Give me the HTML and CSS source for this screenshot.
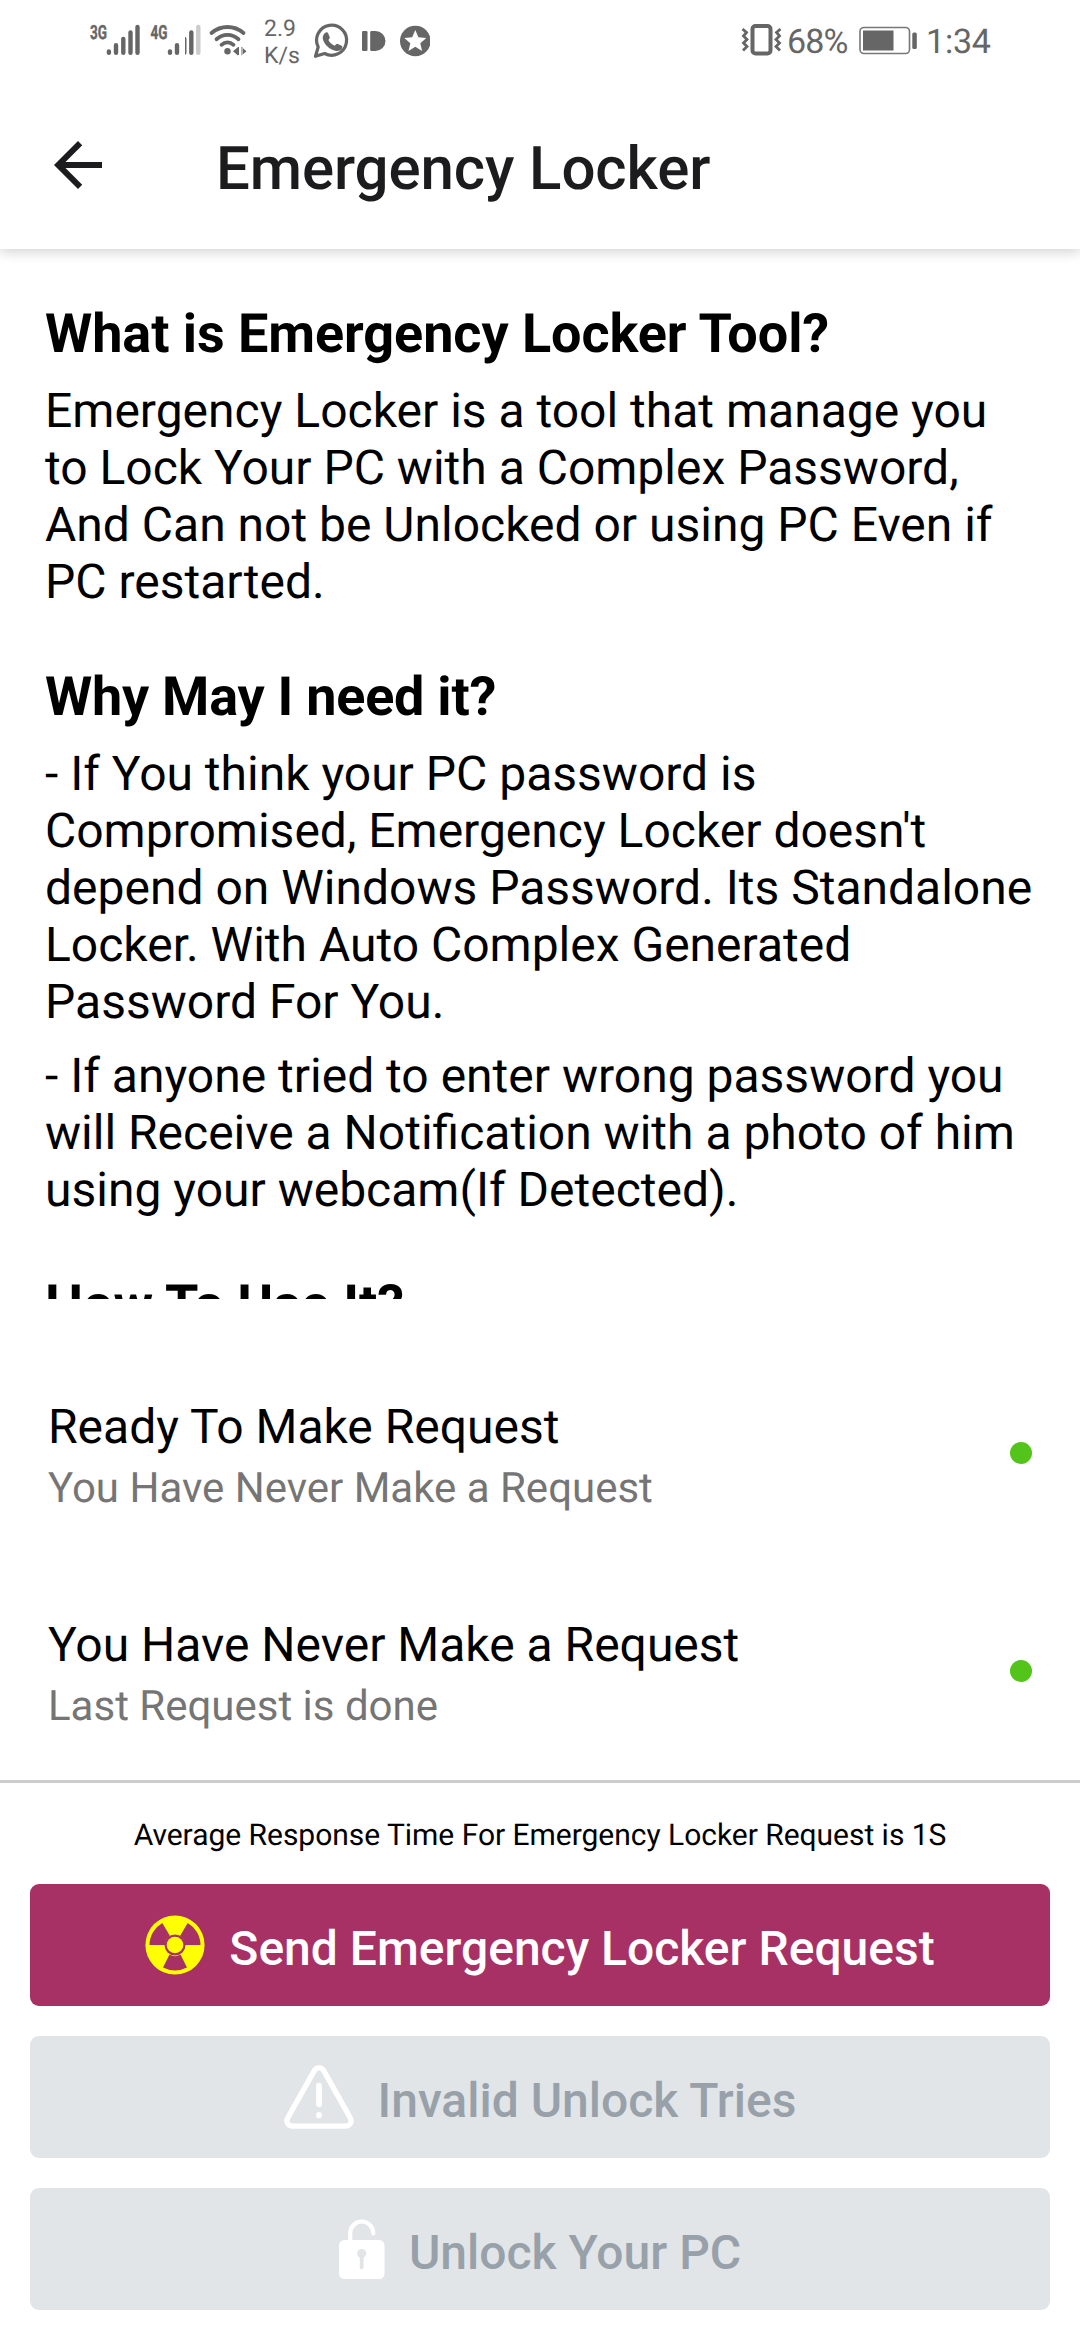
FILE: index.html
```html
<!DOCTYPE html>
<html lang="en">
<head>
<meta charset="utf-8">
<title>Emergency Locker</title>
<link rel="stylesheet" href="styles.css">
</head>
<body>
<div class="screen">
  <div class="statusbar">
    <svg class="status-left" width="105" height="80" viewBox="80 0 105 80" fill="#666">
      <g class="net"><text x="90" y="38.500" textLength="17" lengthAdjust="spacingAndGlyphs">3G</text><text x="150.500" y="38.500" textLength="17" lengthAdjust="spacingAndGlyphs">4G</text></g>
      <g stroke="#666" stroke-width="4.400" stroke-linecap="round"><path d="M108.900 51.500v1.200M116 45.200v7.500M123.300 39v13.700M130.500 32.500v20.200M137.500 27v25.700M170 51.500v1.200M177 45.200v7.500"/></g>
    </svg>
    <svg class="status-icons" width="67" height="80" viewBox="185 0 67 80" fill="none" stroke="#666" stroke-linecap="round">
      <g stroke-width="4.400"><path d="M184.300 39v13.700M191.300 32.500v20.200"/><path stroke="#ccc" d="M198.300 27v25.700"/></g>
      <g stroke-width="3.800"><path d="M211.500 33C221 25 234 25 243.500 33M216.500 39.200C223 33.500 232 33.500 238.500 39.200M221.500 44.800C225 41.500 230 41.500 233.500 44.800"/></g>
      <circle cx="227.500" cy="51.200" r="3.200" fill="#666" stroke="none"/>
      <path fill="#666" stroke="none" d="M233 51.200l5-4.200v8.400zM246.500 51.200l-5-4.200v8.400zM237.500 47h1.500v8h-1.500zM241 47h1.500v8H241z"/>
    </svg>
    <div class="speed"><span>2.9</span><span>K/s</span></div>
    <svg class="status-apps" width="120" height="80" viewBox="310 0 120 80" fill="#666">
      <path fill="none" stroke="#666" stroke-width="3.200" stroke-linejoin="round" d="M315.500 56.300l2.700-9.300a15 15 0 1 1 6.400 6.500z"/>
      <path d="M325 33c1.200-1 2.700-.8 3.200.5l1.500 3.500c.4 1-.2 1.600-1.300 2.900 1.500 2.800 3.600 4.600 6.500 5.800 1.200-1.400 1.900-2.200 2.900-1.800l3.800 1.800c1 .5.800 1.900.1 3-1.300 2-4.200 2.700-6.500 2-6.400-1.900-10-5.600-12-10.500-1-2.800-.3-5.500 1.800-7.200z"/>
      <rect x="362" y="31" width="5.500" height="20" rx="1.300"/>
      <path d="M371.500 31h4a10 10 0 0 1 0 20h-4a1.300 1.300 0 0 1-1.300-1.300V32.300a1.300 1.300 0 0 1 1.300-1.300z"/>
      <circle cx="415.300" cy="41" r="15.300"/>
      <path fill="#fff" d="M415.300 30l3.100 7.300 7.900.7-6 5.200 1.800 7.700-6.800-4.100-6.800 4.100 1.800-7.700-6-5.200 7.900-.7z"/>
    </svg>
    <div class="status-right">
      <svg width="43" height="80" viewBox="740 0 43 80" fill="none" stroke="#666">
        <rect x="752.500" y="26" width="18" height="27.500" rx="3" stroke-width="4"/>
        <path stroke-width="2.800" d="M742.500 29l4 3.500-3 3.500 3.500 3.500-3.500 3.500 3.500 3.500-4 4M780.500 29l-4 3.500 3 3.500-3.500 3.500 3.500 3.500-3.500 3.500 4 4"/>
      </svg>
      <span class="pct">68%</span>
      <svg class="battery" width="60" height="80" viewBox="858 0 60 80">
        <rect x="860" y="27.500" width="49.500" height="26" rx="4" fill="none" stroke="#777" stroke-width="1.600"/>
        <rect x="863" y="30.500" width="30.500" height="20" fill="#666"/>
        <rect x="912.300" y="32.500" width="4.500" height="16.500" rx="1.500" fill="#666"/>
      </svg>
      <span class="clock">1:34</span>
    </div>
  </div>

  <header class="appbar">
    <svg width="72" height="72" viewBox="0 0 24 24" fill="#1c1c1e"><path d="M20 11H7.830l5.590-5.590L12 4l-8 8 8 8 1.410-1.410L7.830 13H20v-2z"/></svg>
    <h1>Emergency Locker</h1>
  </header>

  <main class="info">
    <h2>What is Emergency Locker Tool?</h2>
    <p>Emergency Locker is a tool that manage you<br>to Lock Your PC with a Complex Password,<br>And Can not be Unlocked or using PC Even if<br>PC restarted.</p>
    <h2 class="tight">Why May I need it?</h2>
    <p>- If You think your PC password is<br>Compromised, Emergency Locker doesn't<br>depend on Windows Password. Its Standalone<br>Locker. With Auto Complex Generated<br>Password For You.</p>
    <p>- If anyone tried to enter wrong password you<br>will Receive a Notification with a photo of him<br>using your webcam(If Detected).</p>
    <h2>How To Use It?</h2>
  </main>

  <section class="requests">
    <div class="request">
      <div><div class="name">Ready To Make Request</div><div class="sub">You Have Never Make a Request</div></div>
      <span class="dot"></span>
    </div>
    <div class="request">
      <div><div class="name">You Have Never Make a Request</div><div class="sub">Last Request is done</div></div>
      <span class="dot"></span>
    </div>
  </section>

  <footer class="actions">
    <div class="average">Average Response Time For Emergency Locker Request is 1S</div>
    <button class="btn primary">
      <svg class="radiation" width="60" height="60" viewBox="-30 -30 60 60">
        <circle r="29.600" fill="#ff0"/>
        <g fill="#a73164"><path d="M-5.500 9.500L-12 22.500Q0 28.500 12 22.500L5.500 9.500Q0 13-5.500 9.500z"/><path d="M-10 0H-25.500A25.500 25.500 0 0 1-12.700-22L-5-9A10.500 10.500 0 0 0-10 0zM10 0H25.500A25.500 25.500 0 0 0 12.700-22L5-9A10.500 10.500 0 0 1 10 0z"/><circle r="10.500"/></g>
        <circle r="8.300" fill="#ff0"/>
      </svg>
      <span>Send Emergency Locker Request</span>
    </button>
    <button class="btn">
      <svg class="warning" width="70" height="64" viewBox="0 0 70 66" preserveAspectRatio="none" fill="none" stroke="#fff" stroke-linecap="round" stroke-linejoin="round">
        <path stroke-width="5.400" d="M30.500 5.500L3.800 54.500C1.500 58.500 4 63 8 63H62C66 63 68.500 58.500 66.200 54.500L39.500 5.500C37.500 2 32.500 2 30.500 5.500z"/>
        <path stroke-width="5.800" d="M35 21.300V40.500M35 51.400v.6"/>
      </svg>
      <span>Invalid Unlock Tries</span>
    </button>
    <button class="btn">
      <svg class="lock" width="46" height="60" viewBox="0 0 46 60">
        <path fill="none" stroke="#fff" stroke-width="4.200" stroke-linecap="round" d="M11.200 22V14.500A11.550 12 0 0 1 34.300 14.500"/>
        <rect y="21" width="45.500" height="39" rx="5.500" fill="#fff"/>
        <circle cx="22.700" cy="34.500" r="4.500" fill="#e1e5e8"/><path stroke="#e1e5e8" stroke-width="3.800" stroke-linecap="round" d="M22.700 35v13.300"/>
      </svg>
      <span>Unlock Your PC</span>
    </button>
  </footer>
</div>
</body>
</html>
```
FILE: styles.css
```css
* { box-sizing: border-box; }
body { margin: 0; background: #fff; font-family: Roboto, "Liberation Sans", sans-serif; color: #000; text-rendering: geometricPrecision; }
h1, h2, p { margin: 0; }
svg { display: block; flex: none; }
.screen { width: 1080px; height: 2340px; display: flex; flex-direction: column; overflow: hidden; background: #fff; }

.statusbar { height: 81px; flex: none; display: flex; padding-left: 80px; color: #666; }
.net { font: 700 19.500px Roboto, sans-serif; stroke: #666; stroke-width: .4px; }
.speed { width: 58px; padding: 16px 0 0 12px; font-size: 23px; line-height: 26.500px; display: flex; flex-direction: column; }
.status-right { display: flex; margin-left: auto; width: 340px; height: 80px; }
.pct, .clock { font-size: 34px; line-height: 84px; font-weight: 400; }
.pct { width: 75px; padding-left: 4px; letter-spacing: -.9px; }
.clock { padding-left: 8px; letter-spacing: -.2px; }

.appbar { height: 168px; flex: none; display: flex; align-items: center; padding-left: 42px; box-shadow: 0 3px 12px rgba(0, 0, 0, .18); clip-path: inset(0 0 -24px); }
.appbar h1 { margin-left: 102px; padding-top: 7px; font-size: 60px; line-height: 70px; font-weight: 500; color: #1c1c1e; letter-spacing: -.1px; }

.info { height: 1050px; flex: none; overflow: hidden; padding: 54px 0 0 45px; }
.info h2 { font-size: 54px; line-height: 64px; font-weight: 700; white-space: nowrap; letter-spacing: -.07px; }
.info h2.tight { letter-spacing: -.25px; }
.info p { font-size: 48px; line-height: 57px; white-space: nowrap; margin-top: 17px; }
.info h2 + p { margin-top: 15px; }
.info p + h2 { margin-top: 56px; }

.requests { flex: none; height: 481px; padding: 45px 48px 0; }
.request { height: 218px; display: flex; align-items: center; justify-content: space-between; }
.name { padding-top: 7px; font-size: 48px; line-height: 64px; }
.sub { padding-top: 1px; font-size: 42px; line-height: 58px; color: #757575; }
.dot { width: 22px; height: 22px; border-radius: 50%; background: #52c41a; }

.actions { border-top: 3px solid #ccc; padding: 0 30px; display: flex; flex-direction: column; gap: 30px; }
.average { height: 71px; padding-top: 35px; text-align: center; font-size: 30px; line-height: 36px; letter-spacing: -.03px; }
.btn { height: 122px; border: 0; border-radius: 9px; background: #e1e5e8; color: #98a1a9; display: flex; align-items: center; justify-content: center; gap: 24px; font: 500 48px/56px Roboto, sans-serif; padding: 0; }
.btn span { padding-top: 7px; }
.btn.primary { background: #a73164; color: #fff; }
```
